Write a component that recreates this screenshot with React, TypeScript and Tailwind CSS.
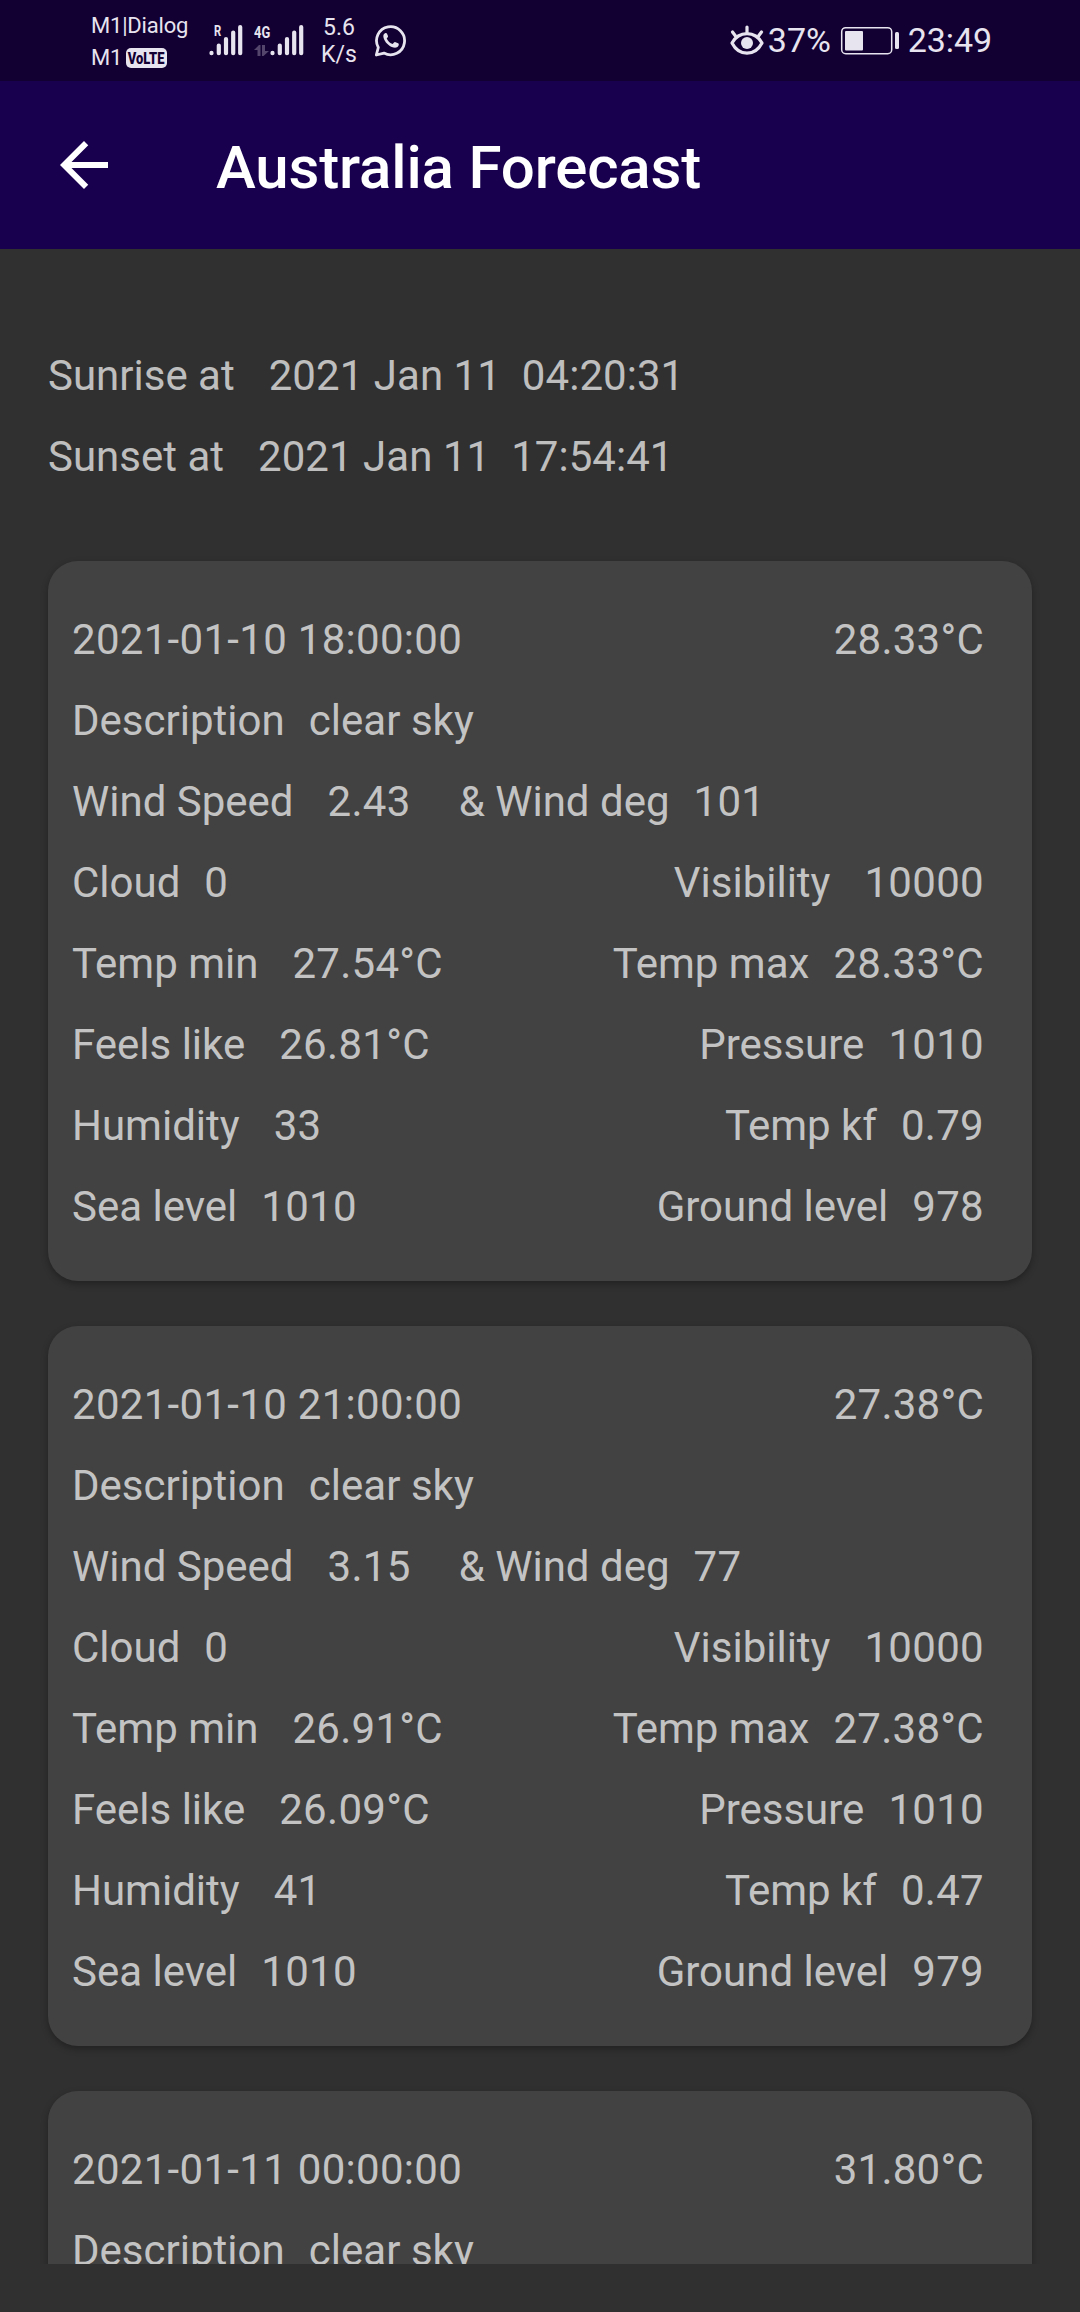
import React from "react";

type Forecast = {
  time: string;
  temp: string;
  details?: {
    wind: string;
    deg: string;
    min: string;
    max: string;
    feels: string;
    humidity: string;
    kf: string;
    ground: string;
  };
};

const forecasts: Forecast[] = [
  {
    time: "2021-01-10 18:00:00",
    temp: "28.33°C",
    details: { wind: "2.43", deg: "101", min: "27.54°C", max: "28.33°C", feels: "26.81°C", humidity: "33", kf: "0.79", ground: "978" },
  },
  {
    time: "2021-01-10 21:00:00",
    temp: "27.38°C",
    details: { wind: "3.15", deg: "77", min: "26.91°C", max: "27.38°C", feels: "26.09°C", humidity: "41", kf: "0.47", ground: "979" },
  },
  { time: "2021-01-11 00:00:00", temp: "31.80°C" },
];

function Pair({ label, value, wide = false }: { label: string; value: string; wide?: boolean }) {
  return (
    <div className={wide ? "flex gap-[34px]" : "flex gap-6"}>
      <span>{label}</span>
      <span className={/^[\d.°C]+$/.test(value) ? "tracking-[0.3px]" : "tracking-[0.05px]"}>{value}</span>
    </div>
  );
}

function Row({ children }: { children: React.ReactNode }) {
  return <div className="flex h-[81px] shrink-0 justify-between pt-[14px] leading-[57px]">{children}</div>;
}

function Card({ time, temp, details }: Forecast) {
  return (
    <section className="h-[720px] shrink-0 rounded-[30px] bg-[#424242] py-9 pr-12 pl-6 shadow-[0_3px_7px_rgba(0,0,0,0.3)]">
      <Row>
        <span className="tracking-[0.3px]">{time}</span>
        <span className="tracking-[0.25px]">{temp}</span>
      </Row>
      <Row>
        <Pair label="Description" value="clear sky" />
      </Row>
      {details && (
        <>
          <Row>
            <div className="flex gap-12">
              <Pair label="Wind Speed" value={details.wind} wide />
              <Pair label="& Wind deg" value={details.deg} />
            </div>
          </Row>
          <Row>
            <Pair label="Cloud" value="0" />
            <Pair label="Visibility" value="10000" wide />
          </Row>
          <Row>
            <Pair label="Temp min" value={details.min} wide />
            <Pair label="Temp max" value={details.max} />
          </Row>
          <Row>
            <Pair label="Feels like" value={details.feels} wide />
            <Pair label="Pressure" value="1010" />
          </Row>
          <Row>
            <Pair label="Humidity" value={details.humidity} wide />
            <Pair label="Temp kf" value={details.kf} />
          </Row>
          <Row>
            <Pair label="Sea level" value="1010" />
            <Pair label="Ground level" value={details.ground} />
          </Row>
        </>
      )}
    </section>
  );
}

function Bars() {
  return (
    <svg width="34" height="32" viewBox="0 0 34 32" stroke="currentColor" strokeWidth="4.2" strokeLinecap="round">
      <path d="M2.5 28.9V29.2M9.8 21.500V29.2M17 15V29.2M24.2 8.500V29.2M31.2 3V29.2" />
    </svg>
  );
}

function StatusBar() {
  return (
    <header className="flex h-[81px] shrink-0 items-start justify-between bg-[#120032] pr-[88px] pl-[90px] text-[#e8e4ef]">
      <div className="flex items-start">
        <div className="w-[119px] pt-[10px] text-[22px] leading-8">
          <div className="pl-px tracking-[-0.2px]">M1|Dialog</div>
          <div className="flex items-start">
            <span className="w-9 pl-px tracking-[-0.3px]">M1</span>
            <span className="mt-[6px] flex h-[20px] w-[41px] items-center justify-center rounded-[5px] bg-[#e8e4ef] text-[#120032]">
              <span className="scale-x-[0.76] text-[17px] leading-5 font-black">VoLTE</span>
            </span>
          </div>
        </div>
        <div className="relative mt-6 h-8 w-[34px]">
          <Bars />
          <span className="absolute top-0 left-[5px] origin-left scale-x-[0.75] text-[15px] leading-[14px] font-bold">R</span>
        </div>
        <div className="relative mt-6 ml-[11px] h-8 w-[49px] pl-[16px]">
          <Bars />
          <span className="absolute top-[1px] left-0 origin-left scale-x-[0.76] text-[17px] leading-[14px] font-bold">4G</span>
          <svg className="absolute top-[21px] left-0 opacity-30" width="15" height="11" viewBox="0 0 15 11" fill="currentColor">
            <path d="M0 5L5 0H6.500V11H3.500V5ZM8 0H11V6H15L9.500 11H8Z" />
          </svg>
        </div>
        <div className="ml-[14px] w-[44px] pt-[14px] text-center text-[23px] leading-[27px]">
          <div>5.6</div>
          <div>K/s</div>
        </div>
        <svg className="mt-6 ml-[13px]" width="34" height="34" viewBox="0 0.5 34 34" fill="none" stroke="currentColor" strokeWidth="2.800">
          <path d="M2.300 31.500L4.300 24A14 14 0 1 1 10 29.600Z" strokeLinejoin="round" />
          <path d="M11.500 9.500C9.500 10 9 12 9.500 14C10.500 18.500 15 23 19.500 24C22 24.500 24.500 23.500 24.800 21.200C24.900 20.300 24.300 20 23.500 19.600L21.500 18.700C20.800 18.400 20.400 18.600 20 19.100L18.700 20.600C16 19.700 13.800 17.500 12.700 15L13.700 13.700C14.100 13.200 14.100 12.800 13.900 12.300L13 10.200C12.700 9.500 12.200 9.300 11.500 9.500Z" fill="currentColor" stroke="none" />
        </svg>
      </div>
      <div className="flex items-start text-[34px] leading-10">
        <svg className="mt-6" width="36" height="34" viewBox="0 0 36 34" fill="none" stroke="currentColor" strokeWidth="3.200" strokeLinecap="round">
          <path d="M3 19C10 6.500 26 6.500 33 19C26 32.500 10 32.500 3 19Z" strokeLinejoin="round" />
          <circle cx="18" cy="19" r="6" fill="currentColor" stroke="none" />
          <path d="M18 3V8M3.500 8L6.500 12M32.500 8L29.500 12" />
        </svg>
        <span className="mt-[20px] ml-[3px] w-[72px]">37%</span>
        <svg className="mt-[26px]" width="60" height="30" viewBox="0 0 60 30" fill="none">
          <rect x="1.700" y="1.700" width="50" height="26" rx="4" stroke="currentColor" strokeWidth="1.500" />
          <rect x="5" y="5" width="18" height="19.500" rx="1" fill="currentColor" />
          <rect x="55" y="6" width="4" height="17" rx="1.500" fill="currentColor" />
        </svg>
        <span className="mt-[20px] ml-[8px] tracking-[-0.1px]">23:49</span>
      </div>
    </header>
  );
}

export default function App() {
  return (
    <div className="flex h-[2312px] w-[1080px] flex-col overflow-hidden bg-[#303030] font-['Roboto',sans-serif] text-white/70">
      <StatusBar />
      <div className="flex h-[168px] shrink-0 items-center bg-[#18004e] pl-12 text-white">
        <svg width="72" height="72" viewBox="0 0 24 24" fill="currentColor">
          <path d="M20 11H7.830l5.590-5.590L12 4l-8 8 8 8 1.410-1.410L7.830 13H20v-2z" />
        </svg>
        <h1 className="mt-[5px] ml-24 text-[60px] leading-[70px] font-medium tracking-[-0.15px]">Australia Forecast</h1>
      </div>
      <main className="flex h-[2015px] shrink-0 flex-col overflow-hidden px-12 pt-[84px] text-[42px] whitespace-pre">
        <Row>
          <Pair label="Sunrise at" value="2021 Jan 11  04:20:31" wide />
        </Row>
        <Row>
          <Pair label="Sunset at" value="2021 Jan 11  17:54:41" wide />
        </Row>
        <div className="mt-[66px] flex flex-col gap-[45px]">
          {forecasts.map((f) => (
            <Card key={f.time} {...f} />
          ))}
        </div>
      </main>
    </div>
  );
}
